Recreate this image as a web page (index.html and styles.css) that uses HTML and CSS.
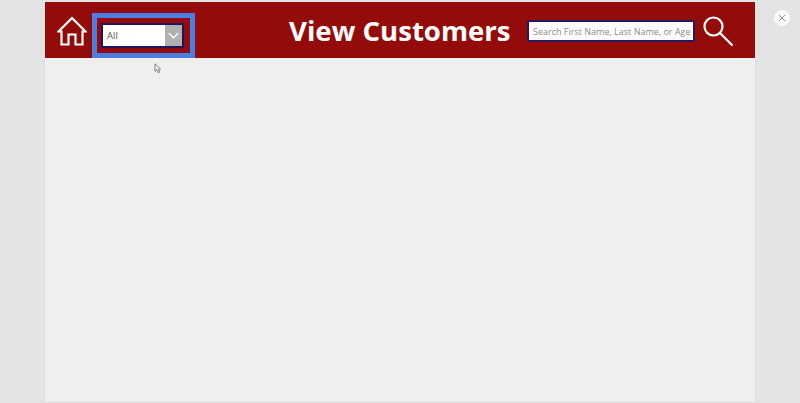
FILE: index.html
```html
<!DOCTYPE html>
<html lang="en">
<head>
  <meta charset="UTF-8" />
  <title>View Customers</title>
  <link rel="stylesheet" href="styles.css">
</head>
<body>
  <div class="screen">
    <header class="topbar">
      <svg class="home-icon" viewBox="0 0 30 30" fill="none" stroke="#fff" stroke-width="2.2" stroke-linejoin="miter">
        <path d="M1.5 15.5 L15 2 L28.5 15.5 H25.5 V28.5 H18.5 V18.5 H11.5 V28.5 H4.5 V15.5 Z" />
      </svg>
      <div class="focus-ring">
        <div class="dropdown">
          <span class="dropdown-value">All</span>
          <span class="dropdown-arrow">
            <svg viewBox="0 0 12 7" fill="none" stroke="#fff" stroke-width="1.6"><path d="M1 1 L6 6 L11 1" /></svg>
          </span>
        </div>
      </div>
      <h1 class="title">View Customers</h1>
      <input class="search-input" type="text" placeholder="Search First Name, Last Name, or Age">
      <svg class="search-icon" viewBox="0 0 30 31" fill="none" stroke="#fff" stroke-width="2.2">
        <circle cx="10.5" cy="10.5" r="9" />
        <path d="M17 17 L29.5 29.5" />
      </svg>
    </header>
  </div>

  <svg class="cursor" viewBox="0 0 8 11" fill="#f4f4f4" stroke="#666" stroke-width="0.8">
    <path d="M1 0.8 V8.4 L2.9 6.8 L4.4 9.8 L5.7 9.1 L4.3 6.3 L6.6 6.1 Z" />
  </svg>

  <button class="close-btn">
    <svg viewBox="0 0 8 8" fill="none" stroke="#777" stroke-width="0.8"><path d="M1 1 L7 7 M7 1 L1 7" /></svg>
  </button>
</body>
</html>
```

FILE: styles.css
```css
* {
  box-sizing: border-box;
  margin: 0;
  padding: 0;
}
html, body {
  height: 100%;
  overflow: hidden;
}
body {
  background: #e3e3e3;
  padding: 2px 45px;
  font-family: "Open Sans", sans-serif;
}
.screen {
  height: 100%;
  background: #efefef;
}
.topbar {
  height: 56px;
  background: #940c0a;
  display: flex;
  align-items: center;
  padding-left: 12px;
}
.home-icon {
  width: 30px;
  height: 30px;
  flex: none;
  margin-top: 1px;
}
.focus-ring {
  width: 103px;
  height: 45px;
  margin-left: 5px;
  margin-top: 11px;
  border: 5px solid #4a7fe6;
  padding: 5px 4px;
  flex: none;
}
.dropdown {
  height: 25px;
  width: 83px;
  border: 2px solid #21125c;
  background: #fff;
  display: flex;
  align-items: stretch;
}
.dropdown-value {
  flex: 1;
  font-size: 9.5px;
  line-height: 21px;
  padding-left: 4px;
  color: #555;
}
.dropdown-arrow {
  width: 17px;
  background: #b0b0b0;
  display: flex;
  align-items: center;
  justify-content: center;
}
.dropdown-arrow svg {
  width: 11px;
  height: 7px;
}
.title {
  margin-left: 94px;
  margin-top: 2px;
  width: 222px;
  flex: none;
  color: #fff;
  font-size: 27.6px;
  font-weight: 700;
  line-height: 1;
  white-space: nowrap;
}
.search-input {
  width: 168px;
  height: 22px;
  margin-left: 16px;
  margin-top: 2px;
  flex: none;
  border: 2px solid #2a1660;
  border-radius: 2px;
  background: #fff;
  padding: 0 0 0 4px;
  font-family: "Open Sans", sans-serif;
  font-size: 9px;
  outline: none;
}
.search-input::placeholder {
  color: #8a8a8a;
  opacity: 1;
}
.search-icon {
  width: 30px;
  height: 31px;
  margin-left: 8px;
  flex: none;
  margin-top: 3px;
}
.cursor {
  position: absolute;
  left: 154px;
  top: 63px;
  width: 8px;
  height: 11px;
}
.close-btn {
  position: absolute;
  left: 774px;
  top: 10px;
  width: 16px;
  height: 16px;
  border: none;
  border-radius: 50%;
  background: #fafafa;
  display: flex;
  align-items: center;
  justify-content: center;
}
.close-btn svg {
  width: 8px;
  height: 8px;
}
```
